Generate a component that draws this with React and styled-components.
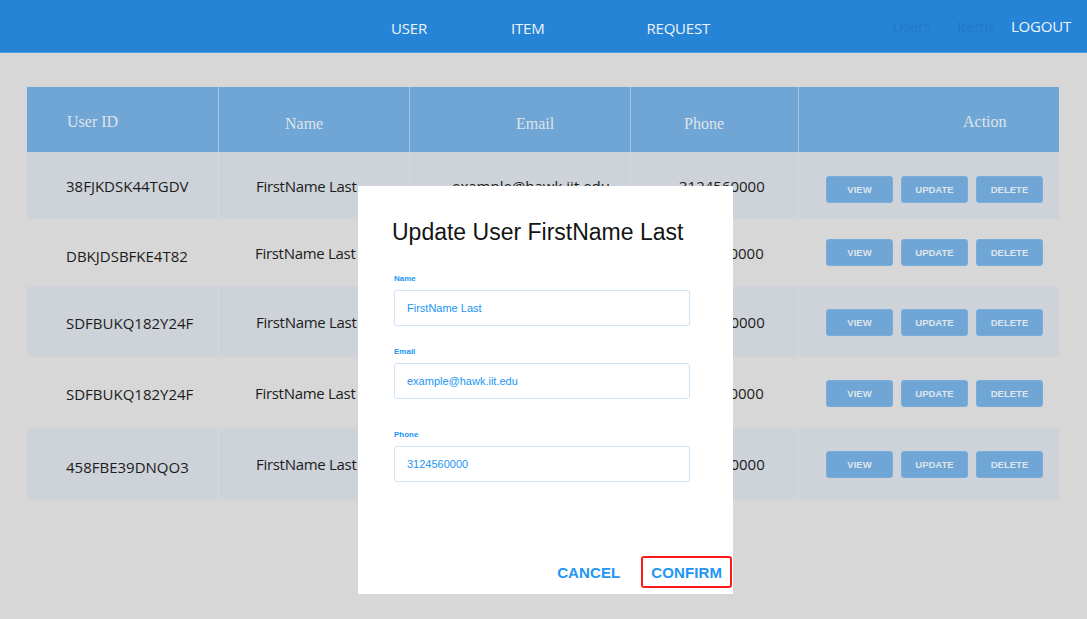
import React from "react";
import styled, { createGlobalStyle } from "styled-components";

const Global = createGlobalStyle`
  html, body { margin: 0; padding: 0; background: #d7d7d7; }
  body { font-family: "Open Sans", "Liberation Sans", sans-serif; }
  * { box-sizing: border-box; }
`;

const Page = styled.div`
  min-height: 619px;
  background: #d7d7d7;
`;

const NavBar = styled.nav`
  height: 53px;
  background: #2584d6;
  border-bottom: 1px solid #4d9de2;
  display: flex;
  align-items: center;
  padding: 0 16px 0 391px;
  font-family: "Open Sans", sans-serif;
  font-size: 15px;
`;

const NavLink = styled.span`
  color: ${(p) => (p.$dim ? "#1f79cc" : "#eef3fa")};
  margin-left: ${(p) => p.$ml || 0}px;
  margin-top: ${(p) => (p.$low ? 4 : 0)}px;
  letter-spacing: -0.2px;
`;

const Spacer = styled.div`
  flex: 1;
`;

const Table = styled.div`
  margin: 34px 0 0 27px;
  width: 1032px;
`;

const cols = "191px 191px 221px 168px 261px";

const HeadRow = styled.div`
  display: grid;
  grid-template-columns: ${cols};
  height: 65px;
  background: #6fa6d5;
`;

const HeadCell = styled.div`
  display: flex;
  align-items: center;
  padding-left: ${(p) => p.$pl}px;
  padding-top: ${(p) => (p.$low ? 9 : 5)}px;
  font-family: "Liberation Serif", serif;
  font-size: 16px;
  color: #dfe4ea;
  border-left: ${(p) => (p.$first ? "none" : "1px solid #a6c7e6")};
`;

const Row = styled.div`
  display: grid;
  grid-template-columns: ${cols};
  height: ${(p) => p.$h}px;
  background: ${(p) => (p.$stripe ? "#ced2d9" : "transparent")};
`;

const Cell = styled.div`
  display: flex;
  align-items: center;
  padding-left: ${(p) => p.$pl}px;
  padding-top: ${(p) => p.$dy || 0}px;
  font-family: "Open Sans", sans-serif;
  font-size: 15px;
  letter-spacing: ${(p) => (p.$tight ? "-0.3px" : "0")};
  color: #1c1c1c;
  border-left: ${(p) =>
    p.$first || !p.$stripe ? "none" : "1px solid #d6d9de"};
`;

const Actions = styled(Cell)`
  gap: 8px;
`;

const ActBtn = styled.button`
  width: 67px;
  height: 27px;
  border: 1px solid #79acd8;
  border-radius: 3px;
  background: #6fa6d5;
  color: #dfe5ec;
  font-family: "Liberation Sans", Arial, sans-serif;
  font-weight: bold;
  font-size: 9.5px;
  padding: 0;
`;

const Dialog = styled.div`
  position: fixed;
  left: 358px;
  top: 186px;
  width: 375px;
  height: 408px;
  background: #ffffff;
  padding: 33px 43px 6px 36px;
  display: flex;
  flex-direction: column;
`;

const Title = styled.h2`
  margin: 0 0 28px -2px;
  font-family: "Liberation Sans", Arial, sans-serif;
  font-weight: normal;
  font-size: 23px;
  line-height: 27px;
  color: #141414;
`;

const Field = styled.div`
  display: flex;
  flex-direction: column;
  margin-top: ${(p) => p.$mt || 0}px;
`;

const Label = styled.label`
  font-family: "Liberation Sans", Arial, sans-serif;
  font-weight: bold;
  font-size: 8px;
  line-height: 10px;
  color: #2196f3;
  margin-bottom: 6px;
`;

const Input = styled.div`
  height: 36px;
  border: 1px solid #cfe4f8;
  border-radius: 3px;
  display: flex;
  align-items: center;
  padding-left: 12px;
  font-family: "Liberation Sans", Arial, sans-serif;
  font-size: 11px;
  color: #2196f3;
`;

const Footer = styled.div`
  margin-top: auto;
  display: flex;
  justify-content: flex-end;
  align-items: center;
  gap: 19px;
  margin-right: -42px;
`;

const TextBtn = styled.button`
  background: transparent;
  border: 2px solid ${(p) => (p.$focus ? "#ff1a1a" : "transparent")};
  border-radius: 3px;
  height: 32px;
  padding: 0 ${(p) => (p.$focus ? 8 : 0)}px;
  font-family: "Liberation Sans", Arial, sans-serif;
  font-weight: bold;
  font-size: 15px;
  color: #2196f3;
  letter-spacing: 0.1px;
`;

const rows = [
  { id: "38FJKDSK44TGDV", h: 67, stripe: true, bdy: 8 },
  { id: "DBKJDSBFKE4T82", h: 67, stripe: false, idy: 6, bdy: -1 },
  { id: "SDFBUKQ182Y24F", h: 71, stripe: true, idy: 2, bdy: 2 },
  { id: "SDFBUKQ182Y24F", h: 71, stripe: false, idy: 2, bdy: 1 },
  { id: "458FBE39DNQO3", h: 72, stripe: true, idy: 5, ndy: -3, bdy: -1 },
];

export default function App() {
  return (
    <Page>
      <Global />
      <NavBar>
        <NavLink $low>USER</NavLink>
        <NavLink $low $ml={84}>ITEM</NavLink>
        <NavLink $low $ml={102}>REQUEST</NavLink>
        <Spacer />
        <NavLink $dim>Users</NavLink>
        <NavLink $dim $ml={26}>Items</NavLink>
        <NavLink $ml={16}>LOGOUT</NavLink>
      </NavBar>
      <Table>
        <HeadRow>
          <HeadCell $first $pl={40}>User ID</HeadCell>
          <HeadCell $pl={66} $low>Name</HeadCell>
          <HeadCell $pl={106} $low>Email</HeadCell>
          <HeadCell $pl={53} $low>Phone</HeadCell>
          <HeadCell $pl={164}>Action</HeadCell>
        </HeadRow>
        {rows.map((r, i) => (
          <Row key={i} $h={r.h} $stripe={r.stripe}>
            <Cell $first $pl={39} $dy={r.idy}>{r.id}</Cell>
            <Cell $pl={37} $dy={r.ndy} $tight $stripe={r.stripe}>FirstName Last</Cell>
            <Cell $pl={42} $stripe={r.stripe}>example@hawk.iit.edu</Cell>
            <Cell $pl={48} $stripe={r.stripe}>3124560000</Cell>
            <Actions $pl={r.stripe ? 27 : 28} $dy={r.bdy} $stripe={r.stripe}>
              <ActBtn>VIEW</ActBtn>
              <ActBtn>UPDATE</ActBtn>
              <ActBtn>DELETE</ActBtn>
            </Actions>
          </Row>
        ))}
      </Table>
      <Dialog>
        <Title>Update User FirstName Last</Title>
        <Field>
          <Label>Name</Label>
          <Input>FirstName Last</Input>
        </Field>
        <Field $mt={21}>
          <Label>Email</Label>
          <Input>example@hawk.iit.edu</Input>
        </Field>
        <Field $mt={31}>
          <Label>Phone</Label>
          <Input>3124560000</Input>
        </Field>
        <Footer>
          <TextBtn>CANCEL</TextBtn>
          <TextBtn $focus>CONFIRM</TextBtn>
        </Footer>
      </Dialog>
    </Page>
  );
}
